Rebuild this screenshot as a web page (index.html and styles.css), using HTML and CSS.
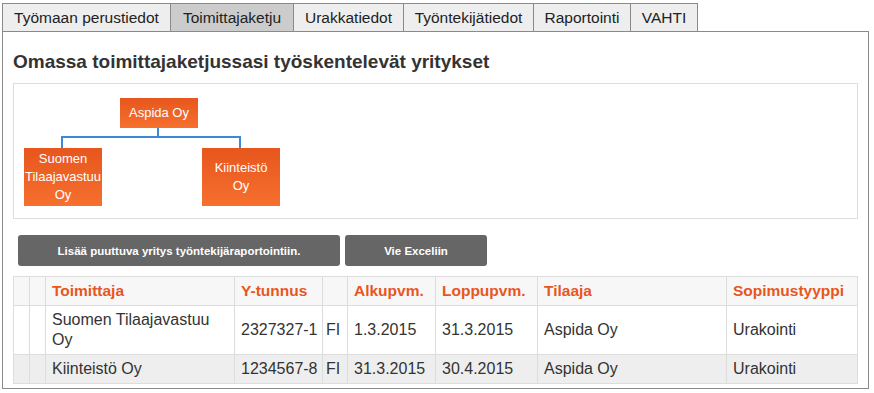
FILE: index.html
```html
<!DOCTYPE html>
<html lang="fi">
<head>
<meta charset="utf-8">
<title>Toimittajaketju</title>
<link rel="stylesheet" href="styles.css">
</head>
<body>
<div class="page">
  <ul class="tabs">
    <li class="tab t1">Työmaan perustiedot</li>
    <li class="tab t2 active">Toimittajaketju</li>
    <li class="tab t3">Urakkatiedot</li>
    <li class="tab t4">Työntekijätiedot</li>
    <li class="tab t5">Raportointi</li>
    <li class="tab t6">VAHTI</li>
  </ul>
  <div class="panel">
    <h2 class="title">Omassa toimittajaketjussasi työskentelevät yritykset</h2>
    <div class="chart">
      <div class="link link-down"></div>
      <div class="link link-bar"></div>
      <div class="link link-left"></div>
      <div class="link link-right"></div>
      <div class="node node-root">Aspida Oy</div>
      <div class="node node-child node-a">Suomen Tilaajavastuu Oy</div>
      <div class="node node-child node-b">Kiinteistö Oy</div>
    </div>
    <div class="actions">
      <button class="btn btn-add">Lisää puuttuva yritys työntekijäraportointiin.</button>
      <button class="btn btn-excel">Vie Exceliin</button>
    </div>
    <table class="grid">
      <colgroup>
        <col class="c-x"><col class="c-x"><col class="c-name"><col class="c-id"><col class="c-cc"><col class="c-start"><col class="c-end"><col class="c-client"><col class="c-type">
      </colgroup>
      <thead>
        <tr><th></th><th></th><th>Toimittaja</th><th>Y-tunnus</th><th></th><th>Alkupvm.</th><th>Loppupvm.</th><th>Tilaaja</th><th>Sopimustyyppi</th></tr>
      </thead>
      <tbody>
        <tr><td></td><td></td><td>Suomen Tilaajavastuu Oy</td><td class="nw">2327327-1</td><td class="cc">FI</td><td class="nw">1.3.2015</td><td class="nw">31.3.2015</td><td>Aspida Oy</td><td>Urakointi</td></tr>
        <tr class="alt"><td></td><td></td><td>Kiinteistö Oy</td><td class="nw">1234567-8</td><td class="cc">FI</td><td class="nw">31.3.2015</td><td class="nw">30.4.2015</td><td>Aspida Oy</td><td>Urakointi</td></tr>
      </tbody>
    </table>
  </div>
</div>
</body>
</html>
```
FILE: styles.css
```css
* { box-sizing: border-box; }
html, body { margin: 0; padding: 0; background: #fff; }
body { font-family: "Liberation Sans", Arial, sans-serif; color: #333; }

.page { width: 867px; margin: 3px 0 0 2px; }

.tabs {
  list-style: none;
  margin: 0;
  padding: 0;
  display: flex;
}
.tab {
  height: 28px;
  line-height: 27px;
  border: 1px solid #8a8a8a;
  border-bottom: none;
  background: #eeeeee;
  color: #222;
  font-size: 15.5px;
  text-align: center;
  margin-left: -1px;
  white-space: nowrap;
}
.tab.t1 { margin-left: 0; width: 169px; }
.tab.t2 { width: 124px; }
.tab.t3 { width: 111px; }
.tab.t4 { width: 131px; }
.tab.t5 { width: 98px; }
.tab.t6 { width: 68px; }
.tab.active { background: #cccccc; }

.panel {
  border: 1px solid #8a8a8a;
  padding: 0 10px 4px 10px;
  height: 358px;
}

.title {
  margin: 19px 0 10px 0;
  font-size: 19px;
  line-height: 22px;
  font-weight: bold;
  color: #333;
}

.chart {
  position: relative;
  height: 136px;
  border: 1px solid #dddddd;
}
.node {
  position: absolute;
  width: 78px;
  display: flex;
  align-items: center;
  justify-content: center;
  text-align: center;
  color: #fff;
  font-size: 13px;
  line-height: 18px;
  background: linear-gradient(to bottom, #e7561d, #f6702f);
}
.node-root { left: 106px; top: 14px; height: 30px; }
.node-child { top: 64px; height: 58px; padding: 0 1px; }
.node-a { left: 10px; }
.node-b { left: 188px; padding: 0 14px; }

.link { position: absolute; background: #3a8ad8; }
.link-down { left: 143px; top: 44px; width: 2px; height: 10px; }
.link-bar { left: 47px; top: 52px; width: 180px; height: 2px; }
.link-left { left: 47px; top: 52px; width: 2px; height: 12px; }
.link-right { left: 225px; top: 52px; width: 2px; height: 12px; }

.actions {
  display: flex;
  gap: 5px;
  margin: 16px 0 10px 5px;
}
.btn {
  height: 31px;
  border: none;
  border-radius: 3px;
  background: #666666;
  color: #fff;
  font-family: "Liberation Sans", Arial, sans-serif;
  font-size: 11.5px;
  font-weight: bold;
  padding: 0;
  cursor: pointer;
}
.btn-add { width: 322px; }
.btn-excel { width: 142px; }

.grid {
  width: 844px;
  border-collapse: collapse;
  table-layout: fixed;
  font-size: 16px;
  line-height: 20px;
}
.c-x { width: 16px; }
.c-name { width: 189px; }
.c-id { width: 88px; }
.c-cc { width: 25px; }
.c-start { width: 88px; }
.c-end { width: 102px; }
.c-client { width: 189px; }
.c-type { width: 131px; }

.grid th, .grid td {
  border: 1px solid #dddddd;
  padding: 4px 6px;
  text-align: left;
  vertical-align: middle;
}
.grid th {
  background: #f7f7f7;
  color: #e8561f;
  font-size: 15.5px;
  font-weight: bold;
  white-space: nowrap;
}
.grid td { color: #333; background: #fff; }
.grid td.nw { white-space: nowrap; padding-right: 0; }
.grid td.cc { padding: 4px 3px; }
.grid tr.alt td { background: #eeeeee; }
```
